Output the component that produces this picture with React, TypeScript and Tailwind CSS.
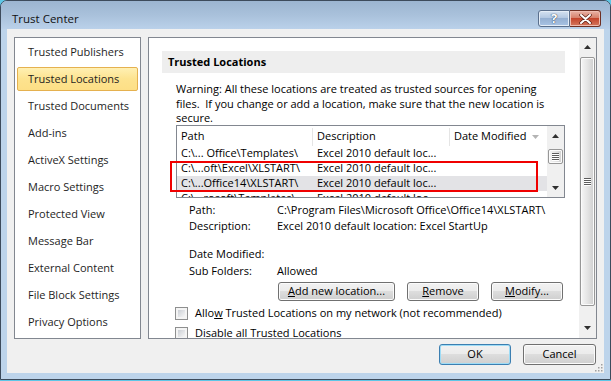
import React from "react";

const navItems = [
  "Trusted Publishers",
  "Trusted Locations",
  "Trusted Documents",
  "Add-ins",
  "ActiveX Settings",
  "Macro Settings",
  "Protected View",
  "Message Bar",
  "External Content",
  "File Block Settings",
  "Privacy Options",
];

const rows = [
  { path: "C:\\... Office\\Templates\\", desc: "Excel 2010 default loc..." },
  { path: "C:\\...oft\\Excel\\XLSTART\\", desc: "Excel 2010 default loc..." },
  { path: "C:\\...Office14\\XLSTART\\", desc: "Excel 2010 default loc...", selected: true },
  { path: "C:\\...rosoft\\Templates\\", desc: "Excel 2010 default loc..." },
];

function Arrow({ up, color = "#303030" }: { up?: boolean; color?: string }) {
  return (
    <svg width="7" height="4" viewBox="0 0 7 4">
      {up ? <path d="M0 4 L3.5 0 L7 4 Z" fill={color} /> : <path d="M0 0 L3.5 4 L7 0 Z" fill={color} />}
    </svg>
  );
}

function Grip() {
  return (
    <div className="flex flex-col gap-[1px]">
      {[0, 1, 2, 3].map((i) => (
        <div key={i} className="w-[7px] h-[1px] bg-[#5c5c5c] shadow-[0_1px_0_#ffffff]" />
      ))}
    </div>
  );
}

function Thumb({ className }: { className: string }) {
  return (
    <div
      className={`border border-[#979797] rounded-[2px] bg-[linear-gradient(to_right,#f6f6f6,#e4e4e4_50%,#cfcfcf)] shadow-[inset_0_0_0_1px_#fbfbfb] flex items-center justify-center ${className}`}
    >
      <Grip />
    </div>
  );
}

function Btn({ children, className = "", isDefault = false }: { children: React.ReactNode; className?: string; isDefault?: boolean }) {
  return (
    <div
      className={`flex items-center justify-center rounded-[3px] border bg-[linear-gradient(to_bottom,#f2f2f2_0%,#ebebeb_50%,#dddddd_50%,#cfcfcf_100%)] ${
        isDefault ? "border-[#3c7fb1] shadow-[inset_0_0_0_1px_#9edcf6]" : "border-[#707070] shadow-[inset_0_0_0_1px_#fbfbfb]"
      } ${className}`}
    >
      {children}
    </div>
  );
}

function CheckBox() {
  return (
    <div className="w-[13px] h-[13px] border border-[#8e8f8f] bg-[#f4f4f4] p-[2px] shrink-0">
      <div className="w-full h-full bg-[linear-gradient(135deg,#cbcfd5,#f6f6f6)]" />
    </div>
  );
}

export default function App() {
  return (
    <div className="w-[611px] h-[381px] bg-[#5ec6e6] overflow-hidden relative font-['Open_Sans',sans-serif] text-[11px] text-black">
      <div className="w-[611px] h-[380px] rounded-t-[7px] border border-[#3d4b5c] bg-[#bdd4eb] flex flex-col">
        {/* title bar */}
        <div className="h-[28px] shrink-0 rounded-t-[6px] bg-[linear-gradient(to_bottom,#9cb5d1,#a9c1db_50%,#bad1ea)] flex items-start justify-between pl-[11px] pr-[9px]">
          <span className="text-[11.5px] leading-[16px] text-[#111] mt-[10px]">Trust Center</span>
          <div className="flex mt-[9px]">
            <div className="w-[32px] h-[17px] rounded-l-[3px] border border-[#5a6f8c] bg-[linear-gradient(to_bottom,#d5e2f1,#b3c8e2_45%,#95b0d2_50%,#a8c3e4)] shadow-[inset_0_0_0_1px_#e4edf7] flex items-center justify-center">
              <span className="text-[13px] font-bold leading-none text-white [text-shadow:0_0_1px_#2a3d57,0_0_1px_#2a3d57]">?</span>
            </div>
            <div className="w-[31px] h-[17px] rounded-r-[3px] border border-l-0 border-[#6e2f22] bg-[linear-gradient(to_bottom,#e9b3a6,#d7816c_45%,#c4452c_50%,#d4785f)] shadow-[inset_0_0_0_1px_#efbdb1] flex items-center justify-center">
              <svg width="13" height="10" viewBox="0 0 13 10">
                <path d="M2 1 L11 9 M11 1 L2 9" stroke="#5a1f14" strokeWidth="3.4" strokeLinecap="round" />
                <path d="M2 1 L11 9 M11 1 L2 9" stroke="#ffffff" strokeWidth="2" strokeLinecap="round" />
              </svg>
            </div>
          </div>
        </div>

        {/* client */}
        <div className="mx-[6px] h-[344px] bg-[#f0f0f0] pt-[8px] px-[7px] flex flex-col relative">
          <div className="flex gap-[7px] h-[302px]">
            {/* nav */}
            <div className="w-[127px] border border-[#828790] bg-white pt-[2px] px-[2px]">
              {navItems.map((item) => (
                <div
                  key={item}
                  className={`h-[24px] mb-[3px] flex items-center pl-[10px] pt-[1px] rounded-[2px] border text-[#1e1e1e] ${
                    item === "Trusted Locations"
                      ? "border-[#e5b14f] bg-[linear-gradient(to_bottom,#fff0b3,#fde38f_50%,#fddf86)]"
                      : "border-transparent"
                  }`}
                >
                  {item}
                </div>
              ))}
            </div>

            {/* right panel */}
            <div className="w-[449px] border border-[#828790] bg-white flex overflow-hidden">
              <div className="flex-1 pl-[13px] pt-[13px] overflow-hidden">
                <div className="w-[403px] h-[22px] bg-[#eeeeee] flex items-center pl-[6px] font-bold">Trusted Locations</div>
                <div className="ml-[14px] mt-[9px] leading-[14.5px] whitespace-nowrap">
                  Warning: All these locations are treated as trusted sources for opening
                  <br />
                  files.&nbsp; If you change or add a location, make sure that the new location is
                  <br />
                  secure.
                </div>

                {/* table */}
                <div className="ml-[14px] mt-[-1px] w-[389px] h-[73px] border border-[#828790] flex overflow-hidden">
                  <div className="w-[370px] flex flex-col">
                    <div className="h-[20px] shrink-0 flex items-center pt-[2px]">
                      <div className="w-[136px] h-full flex items-center pl-[4px] border-r border-[#e5e5e5]">Path</div>
                      <div className="w-[137px] h-full flex items-center pl-[4px] border-r border-[#e5e5e5]">Description</div>
                      <div className="w-[97px] h-full flex items-center pl-[4px] gap-[6px]">
                        Date Modified
                        <Arrow color="#b4b4b4" />
                      </div>
                    </div>
                    {rows.map((r) => (
                      <div key={r.path} className={`h-[15px] shrink-0 flex items-center ${r.selected ? "bg-[#e3e3e6]" : ""}`}>
                        <div className="w-[136px] pl-[4px] whitespace-nowrap">{r.path}</div>
                        <div className="w-[137px] pl-[4px] whitespace-nowrap">{r.desc}</div>
                      </div>
                    ))}
                  </div>
                  <div className="w-[17px] bg-[#f0f0f0] flex flex-col items-center">
                    <div className="h-[20px] flex items-center justify-center">
                      <Arrow up />
                    </div>
                    <Thumb className="w-[15px] h-[15px] mt-[3px]" />
                    <div className="flex-1" />
                    <div className="h-[17px] flex items-center justify-center">
                      <Arrow />
                    </div>
                  </div>
                </div>

                {/* details */}
                <div className="ml-[27px] mt-[4px] leading-[16px]">
                  <div className="flex">
                    <span className="w-[88px]">Path:</span>
                    <span>C:\Program Files\Microsoft Office\Office14\XLSTART\</span>
                  </div>
                  <div className="flex">
                    <span className="w-[88px]">Description:</span>
                    <span>Excel 2010 default location: Excel StartUp</span>
                  </div>
                  <div className="flex mt-[12px]">
                    <span className="w-[88px]">Date Modified:</span>
                  </div>
                  <div className="flex mt-[1px]">
                    <span className="w-[88px]">Sub Folders:</span>
                    <span>Allowed</span>
                  </div>
                </div>

                <div className="ml-[116px] mt-[3px] flex gap-[12px]">
                  <Btn className="w-[117px] h-[19px]">
                    <span>
                      <u>A</u>dd new location...
                    </span>
                  </Btn>
                  <Btn className="w-[72px] h-[19px]">
                    <span>
                      <u>R</u>emove
                    </span>
                  </Btn>
                  <Btn className="w-[72px] h-[19px]">
                    <span>
                      <u>M</u>odify...
                    </span>
                  </Btn>
                </div>

                <div className="ml-[13px] mt-[3px] h-[20px] flex items-center gap-[7px]">
                  <CheckBox />
                  <span>
                    Allo<u>w</u> Trusted Locations on my network (not recommended)
                  </span>
                </div>
                <div className="ml-[13px] h-[20px] flex items-center gap-[7px]">
                  <CheckBox />
                  <span>
                    <u>D</u>isable all Trusted Locations
                  </span>
                </div>
              </div>

              {/* panel scrollbar */}
              <div className="w-[17px] bg-[#f0f0f0] flex flex-col items-center">
                <div className="h-[18px] flex items-center justify-center">
                  <Arrow up />
                </div>
                <Thumb className="w-[15px] h-[249px] mt-[1px]" />
                <div className="flex-1" />
                <div className="h-[20px] flex items-center justify-center">
                  <Arrow />
                </div>
              </div>
            </div>
          </div>

          {/* bottom buttons */}
          <div className="mt-[5px] flex justify-end gap-[12px] pr-[1px]">
            <Btn isDefault className="w-[72px] h-[21px]">
              OK
            </Btn>
            <Btn className="w-[73px] h-[21px]">Cancel</Btn>
          </div>

          {/* resize grip */}
          <svg className="absolute right-[1px] bottom-[1px]" width="8" height="8" viewBox="0 0 8 8">
            {[
              [6, 0],
              [6, 3],
              [3, 3],
              [6, 6],
              [3, 6],
              [0, 6],
            ].map(([x, y]) => (
              <rect key={`${x}-${y}`} x={x} y={y} width="1.5" height="1.5" fill="#a0a0a0" />
            ))}
          </svg>
        </div>
      </div>

      {/* annotation */}
      <div className="absolute left-[170px] top-[161px] w-[368px] h-[31px] border-2 border-[#f00000]" />
    </div>
  );
}
